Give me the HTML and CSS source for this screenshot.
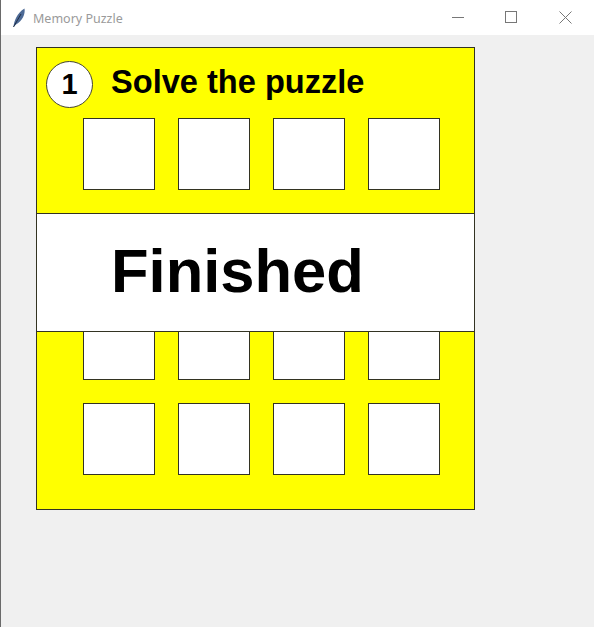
FILE: index.html
```html
<!DOCTYPE html>
<html>
<head>
<meta charset="utf-8">
<title>Memory Puzzle</title>
<link rel="stylesheet" href="styles.css">
</head>
<body>
<div class="window">
  <div class="titlebar">
    <svg class="app-icon" width="14" height="20" viewBox="0 0 14 20">
      <path d="M1.5 19 C2 13 5 5 12.5 0.5 C13.5 6 10.5 13 4 16.5 Z" fill="#4d6a96"/>
      <path d="M1.5 19 L9 6" stroke="#1f2d45" stroke-width="1" fill="none"/>
    </svg>
    <span class="title">Memory Puzzle</span>
    <div class="controls">
      <svg class="ctl" width="54" height="35" viewBox="0 0 54 35"><path d="M22 17.5 H34" stroke="#777" stroke-width="1"/></svg>
      <svg class="ctl" width="54" height="35" viewBox="0 0 54 35"><rect x="21.5" y="11.5" width="11" height="11" fill="none" stroke="#777" stroke-width="1"/></svg>
      <svg class="ctl" width="56" height="35" viewBox="0 0 56 35"><path d="M21.5 11.5 L33.5 23.5 M33.5 11.5 L21.5 23.5" stroke="#777" stroke-width="1"/></svg>
    </div>
  </div>
  <div class="client">
    <div class="board">
      <div class="header">
        <div class="badge">1</div>
        <div class="heading">Solve the puzzle</div>
      </div>
      <div class="grid">
        <div class="cell"></div><div class="cell"></div><div class="cell"></div><div class="cell"></div>
        <div class="cell"></div><div class="cell"></div><div class="cell"></div><div class="cell"></div>
        <div class="cell"></div><div class="cell"></div><div class="cell"></div><div class="cell"></div>
        <div class="cell"></div><div class="cell"></div><div class="cell"></div><div class="cell"></div>
      </div>
      <div class="banner">Finished</div>
    </div>
  </div>
</div>
</body>
</html>
```
FILE: styles.css
```css
html, body {
  margin: 0;
  padding: 0;
  width: 594px;
  height: 627px;
  overflow: hidden;
  background: #f0f0f0;
}

.window {
  width: 594px;
  height: 627px;
  box-sizing: border-box;
  border-left: 1px solid #6a6a6a;
  display: flex;
  flex-direction: column;
}

.titlebar {
  height: 35px;
  flex: none;
  background: #ffffff;
  display: flex;
  align-items: center;
}

.app-icon {
  margin-left: 11px;
  margin-top: 1px;
}

.title {
  margin-left: 7px;
  font-family: "Noto Sans", "Open Sans", sans-serif;
  font-size: 12.5px;
  color: #9a9a9a;
  margin-top: 1px;
}

.controls {
  margin-left: auto;
  display: flex;
  height: 35px;
}

.client {
  flex: 1;
  background: #f0f0f0;
  padding-left: 35px;
  padding-top: 12px;
}

.board {
  position: relative;
  width: 439px;
  height: 463px;
  box-sizing: border-box;
  background: #ffff00;
  border: 1px solid #333322;
  padding: 13px 0 0 9px;
}

.header {
  display: flex;
  align-items: flex-start;
  height: 47px;
}

.badge {
  width: 47px;
  height: 47px;
  box-sizing: border-box;
  border-radius: 50%;
  border: 1px solid #444433;
  background: #ffffff;
  display: flex;
  align-items: center;
  justify-content: center;
  font-family: "Liberation Sans", Arial, sans-serif;
  font-weight: bold;
  font-size: 29px;
  color: #000;
}

.heading {
  margin-left: 18px;
  margin-top: 5px;
  font-family: "Liberation Sans", Arial, sans-serif;
  font-weight: bold;
  font-size: 32.6px;
  line-height: 1;
  color: #000;
  white-space: nowrap;
}

.grid {
  margin-top: 10px;
  margin-left: 37px;
  display: grid;
  grid-template-columns: repeat(4, 72px);
  grid-auto-rows: 72px;
  gap: 23px 23px;
}

.cell {
  box-sizing: border-box;
  background: #ffffff;
  border: 1px solid #333322;
}

.banner {
  position: absolute;
  left: -1px;
  right: -1px;
  top: 165px;
  height: 119px;
  box-sizing: border-box;
  background: #ffffff;
  border: 1px solid #333322;
  padding: 26px 0 0 74px;
  font-family: "Liberation Sans", Arial, sans-serif;
  font-weight: bold;
  font-size: 61.5px;
  line-height: 1;
  color: #000;
}
```
